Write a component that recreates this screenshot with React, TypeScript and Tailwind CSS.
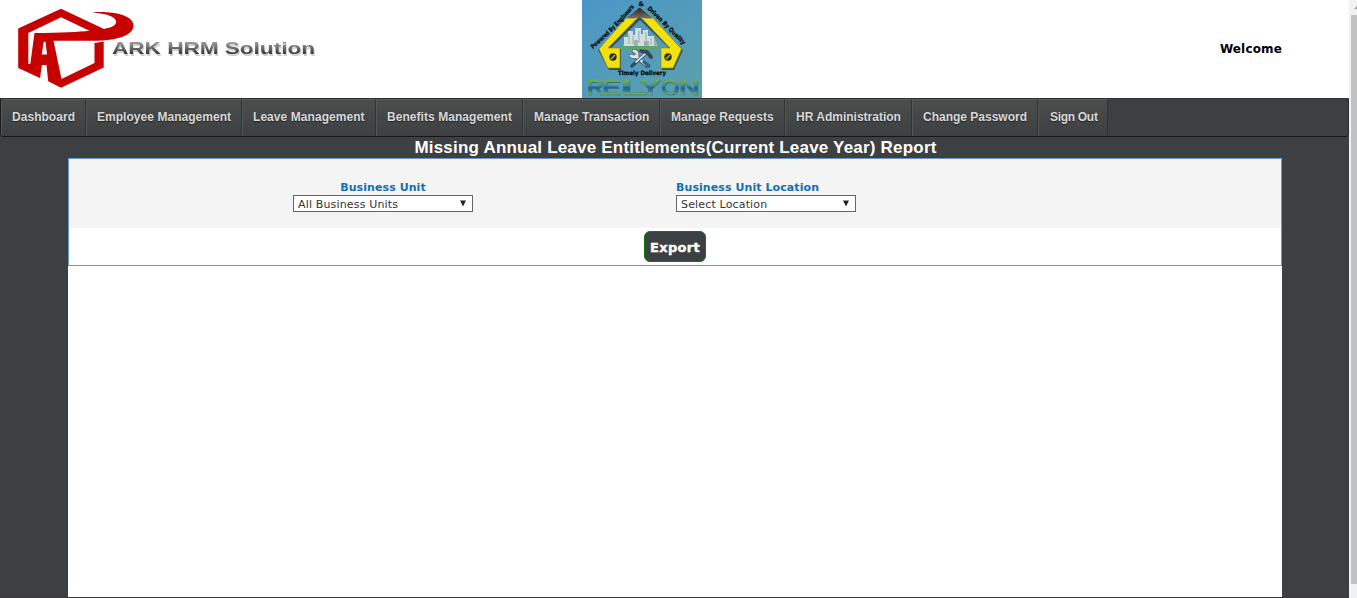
import React from "react";

const navItems = [
  { label: "Dashboard", width: "w-[85px]", spacing: "tracking-[0.04px]" },
  { label: "Employee Management", width: "w-[156px]", spacing: "tracking-[0.04px]" },
  { label: "Leave Management", width: "w-[134px]", spacing: "tracking-[0.06px]" },
  { label: "Benefits Management", width: "w-[147px]", spacing: "tracking-[0.05px]" },
  { label: "Manage Transaction", width: "w-[137px]", spacing: "tracking-normal" },
  { label: "Manage Requests", width: "w-[125px]", spacing: "tracking-[0.04px]" },
  { label: "HR Administration", width: "w-[127px]", spacing: "tracking-normal" },
  { label: "Change Password", width: "w-[126px]", spacing: "tracking-normal" },
  { label: "Sign Out", width: "w-[70px]", spacing: "ml-px tracking-[-0.3px]" },
];

const relyonLetters = [
  { letter: "R", x: 5, width: 16 },
  { letter: "E", x: 20, width: 18 },
  { letter: "L", x: 38, width: 27 },
  { letter: "Y", x: 58, width: 20 },
  { letter: "O", x: 79, width: 18 },
  { letter: "N", x: 97, width: 20 },
];

function ArkLogo() {
  return (
    <svg className="block h-[98px] w-[330px]" viewBox="0 0 330 98" role="img" aria-label="ARK HRM Solution">
      <defs>
        <linearGradient id="arkText" x1="0" y1="0" x2="0" y2="1">
          <stop offset="0.2" stopColor="#969696" />
          <stop offset="0.75" stopColor="#3c3c3c" />
        </linearGradient>
        <filter id="arkSoft" x="-5%" y="-20%" width="110%" height="150%">
          <feGaussianBlur stdDeviation="0.65" />
        </filter>
      </defs>
      <path d="M18.2 28.5 61 8.7 104 29C112 27.5 116.2 25.2 116.2 21.8C116.2 17 107 13.3 92 12.4C112 10.8 133.5 15 133.5 25.5C133.5 35.5 117 40.8 93 40.8H53.5L61.5 79 94.5 63V43L103.7 41.5V67.5L61 87.8 48.2 81.3 46.5 65H42L40 78 18.2 68Z" fill="#c70000" />
      <path d="M28.3 33 61 17.2 89.5 30.7Q74 32.5 34.5 33L30.3 64H28.3Z" fill="#fff" />
      <path d="M43.8 41.7H45.5L47 54.5H41.7Z" fill="#fff" />
      <g filter="url(#arkSoft)" fontFamily="Liberation Sans, Arial, sans-serif" fontWeight="700" fontSize="17">
        <text x="113" y="55.5" textLength="203" lengthAdjust="spacingAndGlyphs" fill="#cfcfcf">ARK HRM Solution</text>
        <text x="112" y="54" textLength="203" lengthAdjust="spacingAndGlyphs" fill="url(#arkText)">ARK HRM Solution</text>
      </g>
    </svg>
  );
}

function RelyonLogo() {
  return (
    <svg className="block h-[98px] w-[120px]" viewBox="0 0 120 98" role="img" aria-label="Relyon">
      <defs>
        <linearGradient id="sky" x1="0" y1="0" x2="1" y2="1">
          <stop stopColor="#4b96c8" />
          <stop offset="1" stopColor="#5ba0ac" />
        </linearGradient>
        <linearGradient id="relyonFill" gradientUnits="userSpaceOnUse" x1="0" y1="79" x2="0" y2="95">
          <stop offset="0.1" stopColor="#6cab58" />
          <stop offset="0.4" stopColor="#4e9280" />
          <stop offset="0.55" stopColor="#1f5f9d" />
          <stop offset="0.75" stopColor="#357c92" />
          <stop offset="0.95" stopColor="#7cb552" />
        </linearGradient>
        <linearGradient id="peak" x1="0" y1="0" x2="0" y2="1">
          <stop stopColor="#282522" />
          <stop offset="1" stopColor="#77716c" />
        </linearGradient>
        <path id="leftSlope" d="M11 49Q35 28 54 5" />
        <path id="rightSlope" d="M65 9Q82 25 102 46" />
      </defs>
      <rect width="120" height="98" fill="url(#sky)" />
      <path d="M58 8 101 50 92 70H80V50H89L58 20 28 49H39V70H27L16 50Z" fill="#2f3d42" opacity="0.8" />
      <path d="M45 17H56.5L26 48H38V68H26L17 49ZM58.5 17H70L99.5 49 91 68H79V48H88Z" fill="#f1e20d" stroke="#8e8615" strokeWidth="0.6" />
      <path d="M57.5 7.5 71 18.5H63L57.5 17 52 18.5H44Z" fill="url(#peak)" />
      <path d="M43 36H73L78 49H39Z" fill="#60a66a" />
      <path d="M45 37H72L76 46H41Z" fill="#9ab6ae" />
      <path d="M42 46V37H46V31H51V35H53V28H59V34H61V30H66V36H72V46H67V41H62V46H56V40H52V46Z" fill="#d2dedf" />
      <path d="M47 34V44M51 36V44M57 31V43M64 32V44M69 38V45" fill="none" stroke="#87a0a1" strokeWidth="0.8" />
      <g fill="none" strokeLinecap="round">
        <path d="m54 57 11 9" stroke="#52676f" strokeWidth="4.5" />
        <path d="M49 56q5 2 6-1t-3-4" stroke="#53676c" strokeWidth="4.5" />
        <path d="M49 56q5 2 6-1t-3-4M55 57l8 7" stroke="#e1e9e8" strokeWidth="2.8" />
        <path d="m62 62 5 4" stroke="#27639c" strokeWidth="3.5" />
        <path d="m50 66 13-12" stroke="#244e7c" strokeWidth="3.5" />
        <path d="m54 62 9-8" stroke="#d4dfe5" strokeWidth="1.8" />
        <path d="m59 51 6 1 4 5" stroke="#3b474e" strokeWidth="3.8" />
      </g>
      <circle cx="31" cy="57" r="3.7" fill="#292d27" />
      <circle cx="86" cy="57" r="3.7" fill="#292d27" />
      <path d="m29 59 4-4m51 4 4-4" stroke="#d6c719" strokeWidth="1.1" />
      <g fontFamily="DejaVu Sans, sans-serif" fontWeight="700" fontSize="6" fill="#071014" stroke="#071014" strokeWidth="0.3">
        <text><textPath href="#leftSlope" textLength="59" lengthAdjust="spacingAndGlyphs">Powered By Engineers</textPath></text>
        <text x="56.5" y="5.5">&amp;</text>
        <text><textPath href="#rightSlope" textLength="51" lengthAdjust="spacingAndGlyphs">Driven By Quality</textPath></text>
        <text x="36" y="75" textLength="48" lengthAdjust="spacingAndGlyphs">Timely Delivery</text>
      </g>
      <g fontFamily="Liberation Sans, Arial, sans-serif" fontSize="21">
        {relyonLetters.map(({ letter, x, width }) => (
          <g key={letter}>
            <text x={x + 0.7} y="95" textLength={width} lengthAdjust="spacingAndGlyphs" fill="#386f85" stroke="#386f85" strokeWidth="0.7">{letter}</text>
            <text x={x} y="94.3" textLength={width} lengthAdjust="spacingAndGlyphs" fill="url(#relyonFill)" stroke="url(#relyonFill)" strokeWidth="0.8">{letter}</text>
          </g>
        ))}
      </g>
    </svg>
  );
}

function SelectBox({ value }: { value: string }) {
  return (
    <button className="flex h-[17px] w-[180px] items-center justify-between border border-[#646464] bg-white pl-1 pr-[5px] text-[11px] leading-[15px] tracking-[0.16px] text-[#333]">
      <span className="pt-px">{value}</span>
      <svg className="mb-px h-[7px] w-[8px]" viewBox="0 0 8 7"><path d="M1 0.5H7L4 6.5Z" fill="#222" /></svg>
    </button>
  );
}

export default function App() {
  return (
    <div className="flex h-[598px] w-full overflow-hidden bg-[#3d4043] font-['Verdana','DejaVu_Sans',sans-serif]">
      <div className="flex w-[1349px] flex-col">
        <header className="grid h-[98px] shrink-0 grid-cols-[582px_120px_1fr] items-center bg-white">
          <ArkLogo />
          <RelyonLogo />
          <div className="pr-[67px] text-right text-[12px] leading-4 font-bold tracking-[0.15px] text-black">Welcome</div>
        </header>
        <nav className="flex h-[39px] shrink-0 overflow-hidden rounded-[4px] border border-t-[#2e3032] border-r-[#292b2d] border-b-[#141617] border-l-[#191b1c]">
          {navItems.map(({ label, width, spacing }) => (
            <a key={label} href="#" className={`${width} flex shrink-0 items-center border-t border-r border-t-[#565a58] border-r-[#303334] bg-linear-to-b from-[#4b4d4c] to-[#3c4042] pb-[3px] pl-[11px] shadow-[inset_1px_0_0_#525654]`}>
              <span className={`${spacing} whitespace-nowrap font-['Liberation_Sans',Arial,sans-serif] text-[12px] leading-[14px] font-bold text-[#d8d8d8] [text-shadow:0_1px_1px_#222]`}>{label}</span>
            </a>
          ))}
        </nav>
        <h1 className="h-[21px] shrink-0 pl-[2px] text-center font-['Liberation_Sans',Arial,sans-serif] text-[17px] leading-[21px] font-bold tracking-[0.2px] text-white">Missing Annual Leave Entitlements(Current Leave Year) Report</h1>
        <main className="ml-[68px] h-[439px] w-[1214px] bg-white">
          <section className="h-[108px] border border-[#6699cc]">
            <div className="flex h-[69px] gap-[203px] bg-[#f4f4f4] pt-[22px] pl-[224px] text-[11px] leading-[14px] font-bold tracking-[0.08px] text-[#136fb1]">
              <div className="w-[180px] text-center"><label className="block">Business Unit</label><div className="font-normal"><SelectBox value="All Business Units" /></div></div>
              <div className="w-[180px]"><label className="block">Business Unit Location</label><div className="font-normal"><SelectBox value="Select Location" /></div></div>
            </div>
            <div className="flex h-[37px] items-center justify-center">
              <button className="h-[31px] w-[62px] rounded-[6px] border border-[#087c08] bg-[#3d4043] pt-px text-[13px] leading-[29px] font-black tracking-[0.3px] text-white [-webkit-text-stroke:0.4px_white]">Export</button>
            </div>
          </section>
        </main>
        <div className="h-px w-full bg-[#3b373c]" />
      </div>
      <aside className="w-2 shrink-0 bg-[#f1f1f1] pl-[2px]">
        <div className="flex h-[15px] items-center justify-end overflow-hidden"><svg className="h-[5px] w-[3px]" viewBox="0 0 3 5"><path d="M0 4 3 1V4Z" fill="#999" /></svg></div>
        <div className="h-[569px] bg-[#c1c1c1]" />
      </aside>
    </div>
  );
}
